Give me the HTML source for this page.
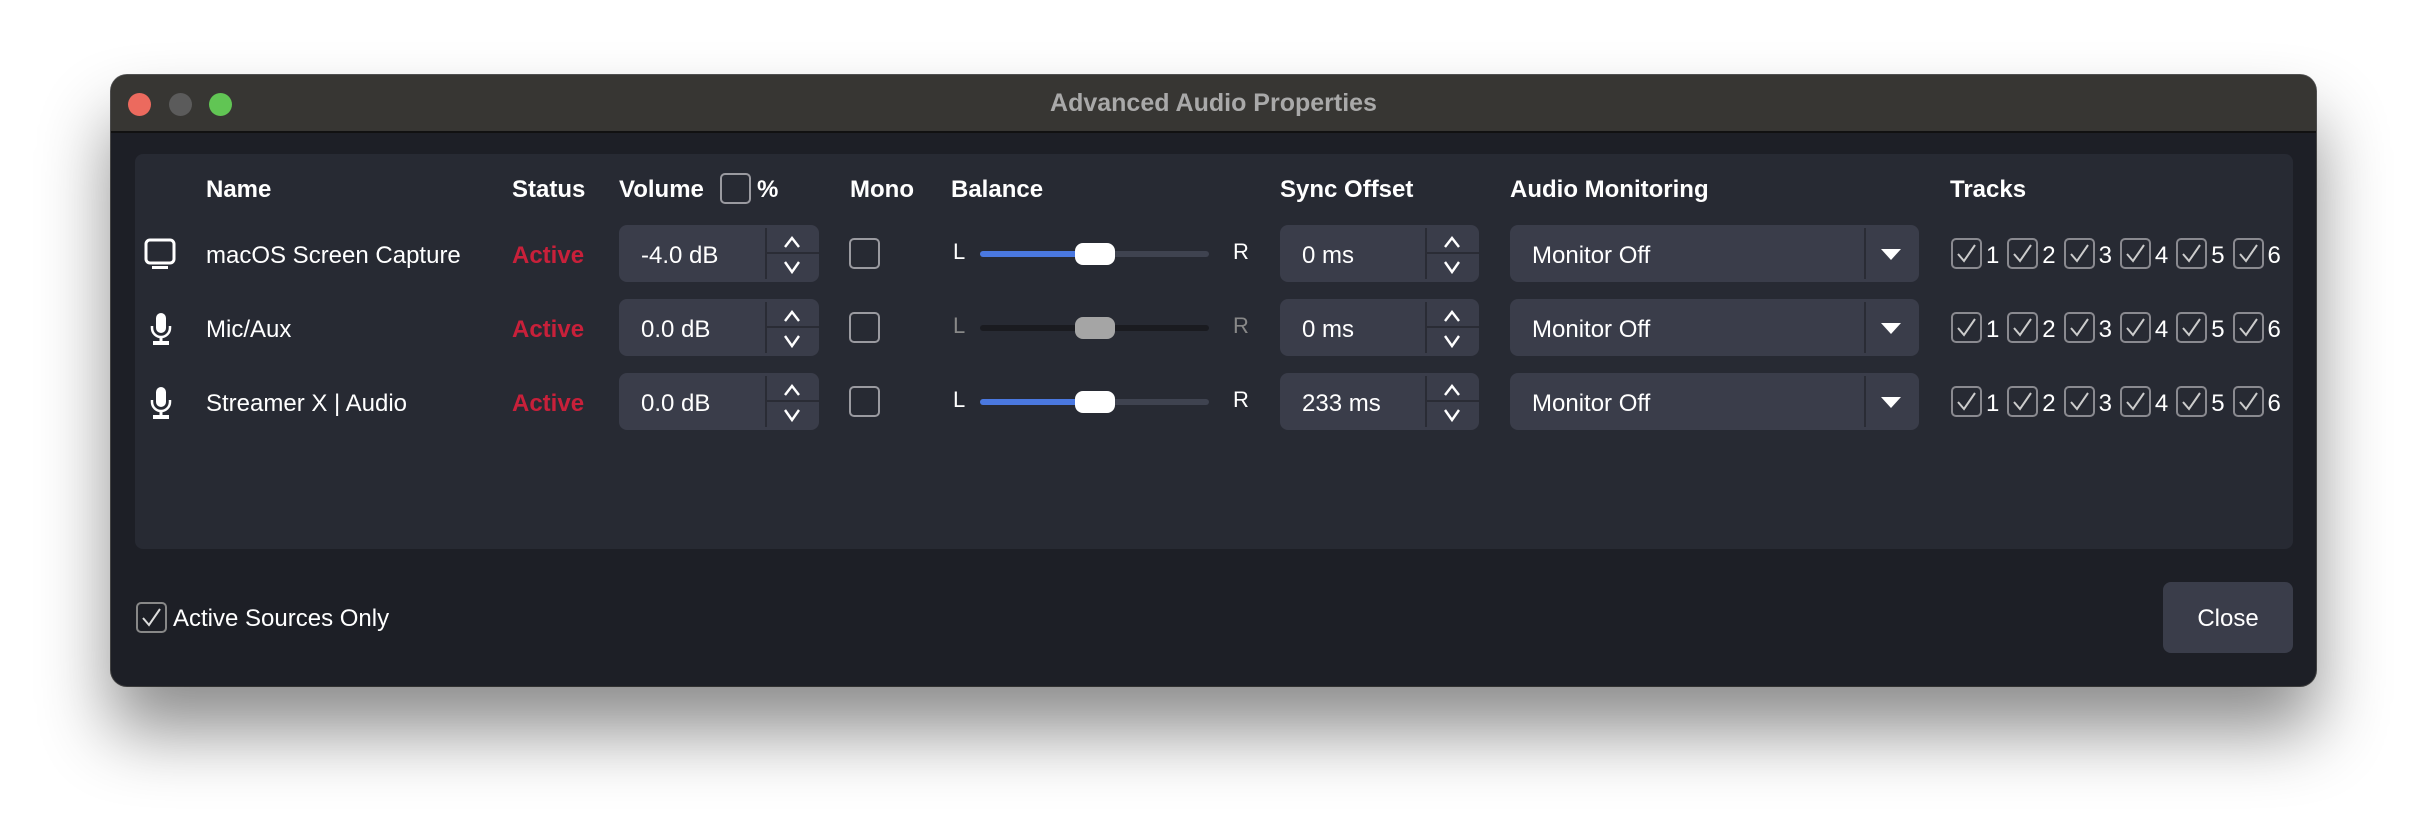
<!DOCTYPE html>
<html><head><meta charset="utf-8"><style>
*{margin:0;padding:0;box-sizing:border-box}
body{width:2428px;height:834px;background:#fff;position:relative;overflow:hidden;font-family:"Liberation Sans",sans-serif;color:#fff}
.win{position:absolute;left:111px;top:75px;width:2205px;height:611px;background:#1d1f26;border-radius:16px;box-shadow:0 45px 70px rgba(0,0,0,.45),0 0 0 1px #555;overflow:hidden}
.tb{position:absolute;left:0;top:0;width:100%;height:58px;background:#373633;border-bottom:2px solid #111}
.tl{position:absolute;top:18px;width:23px;height:23px;border-radius:50%}
.title{position:absolute;left:0;right:0;top:14px;text-align:center;font-weight:bold;font-size:25px;color:#a9a9a9}
.panel{position:absolute;left:24px;top:79px;width:2158px;height:395px;background:#272a33;border-radius:8px}
.a{position:absolute}
.h{font-weight:bold;font-size:24px;top:101px}
.t{font-size:24px}
.red{color:#c8203a;font-weight:bold;font-size:24px}
.box{position:absolute;background:#3a3d4a;border-radius:8px;height:57px}
.cb{position:absolute;width:31px;height:31px;border:2px solid #9a9aa0;border-radius:5px}
.sl{position:absolute;height:6px;border-radius:3px;background:#1d1f26}
.hd{position:absolute;width:40px;height:22px;border-radius:8px;background:#fff}
</style></head><body>
<div class="win">
<div class="tb">
<div class="tl" style="left:17px;background:#ec6a5e"></div>
<div class="tl" style="left:58px;background:#5b5b5b"></div>
<div class="tl" style="left:98px;background:#61c554"></div>
<div class="title">Advanced Audio Properties</div>
</div>
<div class="panel"></div>
<div class="a h" style="left:95px">Name</div>
<div class="a h" style="left:401px">Status</div>
<div class="a h" style="left:508px">Volume</div>
<div class="cb" style="left:609px;top:98px"></div>
<div class="a h" style="left:646px">%</div>
<div class="a h" style="left:739px">Mono</div>
<div class="a h" style="left:840px">Balance</div>
<div class="a h" style="left:1169px">Sync Offset</div>
<div class="a h" style="left:1399px">Audio Monitoring</div>
<div class="a h" style="left:1839px">Tracks</div>
<div id="rows"></div>
<div class="cb" style="left:25px;top:527px;border-color:#888"><svg width="27" height="27" style="position:absolute;left:0;top:0"><path d="M5 14 L11 21 L22 5" stroke="#ddd" stroke-width="2" fill="none"/></svg></div>
<div class="a t" style="left:62px;top:530px">Active Sources Only</div>
<div class="box" style="left:2052px;top:507px;width:130px;height:71px;text-align:center;line-height:73px;font-size:24px">Close</div>
</div>
<script>
var rows=[["macOS Screen Capture","-4.0 dB","0 ms",1,"mon"],["Mic/Aux","0.0 dB","0 ms",0,"mic"],["Streamer X | Audio","0.0 dB","233 ms",1,"mic"]];
var h="";
rows.forEach(function(r,i){
 var cy=178+i*74; var top=cy-28;
 if(r[4]=="mon") h+='<svg class="a" style="left:33px;top:'+(cy-15)+'px" width="32" height="34"><rect x="2" y="2" width="28" height="23" rx="4" stroke="#fff" stroke-width="3" fill="none"/><rect x="8" y="28" width="16" height="3" fill="#fff"/></svg>';
 else h+='<svg class="a" style="left:38px;top:'+(cy-15)+'px" width="24" height="36"><rect x="7" y="1" width="10" height="20" rx="5" fill="#fff"/><path d="M3 14 v2 a9 9 0 0 0 18 0 v-2" stroke="#fff" stroke-width="2.5" fill="none"/><rect x="10.5" y="24" width="3" height="6" fill="#fff"/><rect x="4" y="29" width="16" height="4" fill="#fff"/></svg>';
 h+='<div class="a t" style="left:95px;top:'+(cy-11)+'px">'+r[0]+'</div>';
 h+='<div class="a red" style="left:401px;top:'+(cy-11)+'px">Active</div>';
 function spin(x,w,dx,txt){var s='<div class="box" style="left:'+x+'px;top:'+top+'px;width:'+w+'px"><div class="a t" style="left:22px;top:17px">'+txt+'</div><div class="a" style="left:'+dx+'px;top:3px;width:2px;height:51px;background:#2a2c35"></div><div class="a" style="left:'+dx+'px;top:27px;width:'+(w-dx)+'px;height:2px;background:#2a2c35"></div><svg class="a" style="left:'+(dx+12)+'px;top:5px" width="30" height="48"><path d="M8 17 L15 8 L22 17 M8 32 L15 42 L22 32" stroke="#fff" stroke-width="2.4" fill="none"/></svg></div>';return s;}
 h+=spin(508,200,146,r[1]);
 h+='<div class="cb" style="left:738px;top:'+(cy-15)+'px"></div>';
 var c=r[3]?"#fff":"#888";
 h+='<div class="a t" style="left:842px;top:'+(cy-14)+'px;font-size:22px;color:'+c+'">L</div>';
 h+='<div class="a t" style="left:1122px;top:'+(cy-14)+'px;font-size:22px;color:'+c+'">R</div>';
 h+='<div class="sl" style="left:869px;top:'+(cy-2)+'px;width:229px;background:'+(r[3]?"#3f4350":"#1a1b20")+'"></div>';
 if(r[3]) h+='<div class="sl" style="left:869px;top:'+(cy-2)+'px;width:115px;background:#4a78e0"></div>';
 h+='<div class="hd" style="left:964px;top:'+(cy-10)+'px;background:'+(r[3]?"#fff":"#a5a5a5")+'"></div>';
 h+=spin(1169,199,145,r[2]);
 h+='<div class="box" style="left:1399px;top:'+top+'px;width:409px"><div class="a t" style="left:22px;top:17px">Monitor Off</div><div class="a" style="left:354px;top:3px;width:2px;height:51px;background:#2a2c35"></div><svg class="a" style="left:370px;top:20px" width="22" height="18"><path d="M1 4 H21 L11 15 Z" fill="#fff"/></svg></div>';
 for(var k=0;k<6;k++){var x=1840+k*56.3;
  h+='<div class="cb" style="left:'+x+'px;top:'+(cy-15)+'px;border-color:#8a8a90"><svg width="27" height="27" style="position:absolute;left:0;top:0"><path d="M5 14 L11 21 L22 5" stroke="#ccc" stroke-width="2" fill="none"/></svg></div><div class="a t" style="left:'+(x+35)+'px;top:'+(cy-11)+'px">'+(k+1)+'</div>';}
});
document.getElementById("rows").outerHTML=h;
</script>
</body></html>
